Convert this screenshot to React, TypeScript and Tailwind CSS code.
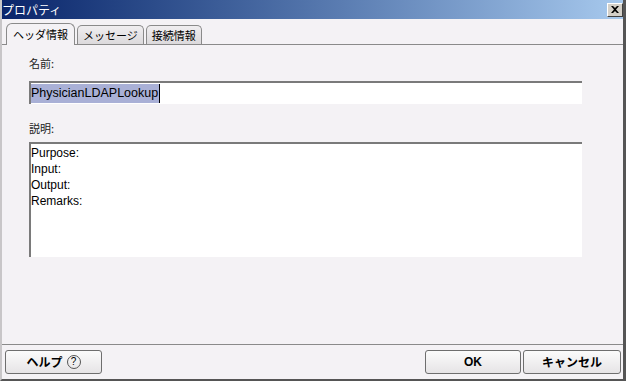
import React from 'react'

const jp = { fontFamily: '"Noto Sans CJK JP", "DejaVu Sans", sans-serif' }
const latin = { fontFamily: '"Liberation Sans", Arial, sans-serif' }

function Tab({ label, active }: { label: string; active?: boolean }) {
  return (
    <div
      className={
        active
          ? 'h-[22px] px-[6px] flex items-center rounded-t-[6px] border border-b-0 border-[#8a8a8a] bg-[#f4f2f5] text-[11px] text-black relative -mb-px z-10'
          : 'h-[19px] px-[5px] flex items-center rounded-t-[5px] border border-b-0 border-[#8a8a8a] bg-gradient-to-b from-[#f0eef0] to-[#dcdadc] text-[11px] text-black'
      }
      style={jp}
    >
      {label}
    </div>
  )
}

function Btn({ children, className }: { children: React.ReactNode; className?: string }) {
  return (
    <button
      className={
        'h-[24px] rounded-[3px] border border-[#6e6e6e] bg-gradient-to-b from-[#fbfbfb] to-[#e6e4e6] text-[12px] font-bold text-black flex items-center justify-center ' +
        (className ?? '')
      }
      style={jp}
    >
      {children}
    </button>
  )
}

export default function App() {
  return (
    <div className="w-[626px] h-[381px] bg-[#f4f2f5] flex flex-col border-l-2 border-l-[#c8c6c8] border-r-[3px] border-r-[#555] border-b-[2px] border-b-[#555] overflow-hidden">
      {/* タイトルバー */}
      <div className="h-[19px] shrink-0 flex items-center justify-between bg-gradient-to-r from-[#0a246a] to-[#a8caee] pl-[2px] pr-[3px] -ml-[2px] -mr-[3px]">
        <span className="text-white text-[12px] leading-none" style={jp}>
          プロパティ
        </span>
        <div className="w-[16px] h-[14px] bg-[#d4d0c8] border border-t-white border-l-white border-r-[#404040] border-b-[#404040] flex items-center justify-center">
          <svg width="8" height="7" viewBox="0 0 8 7">
            <path d="M0 0 L2 0 L4 2 L6 0 L8 0 L5 3.5 L8 7 L6 7 L4 5 L2 7 L0 7 L3 3.5 Z" fill="#000" />
          </svg>
        </div>
      </div>

      {/* タブ */}
      <div className="flex-1 flex flex-col pt-[3px]">
        <div className="h-[22px] flex items-end gap-[2px] pl-[4px]">
          <Tab label="ヘッダ情報" active />
          <Tab label="メッセージ" />
          <Tab label="接続情報" />
        </div>
        <div className="h-[301px] border-t border-b border-[#8a8a8a] pl-[27px] pr-[41px] pt-[9px]">
          <div className="text-[11px] text-[#222] h-[18px] leading-[18px]" style={jp}>
            名前:
          </div>
          <div className="mt-[9px] h-[23px] bg-white border-t-2 border-l-2 border-t-[#7a7a7a] border-l-[#7a7a7a] flex items-center">
            <span className="bg-[#a9b0d6] text-[12.5px] leading-[19px] text-black pr-[1px] border-r border-black" style={latin}>
              PhysicianLDAPLookup
            </span>
          </div>
          <div className="mt-[15px] text-[11px] text-[#222] h-[18px] leading-[18px]" style={jp}>
            説明:
          </div>
          <div
            className="mt-[5px] h-[115px] bg-white border-t-2 border-l-2 border-t-[#7a7a7a] border-l-[#7a7a7a] text-[12px] leading-[16px] text-black pt-[1px]"
            style={latin}
          >
            <div>Purpose:</div>
            <div>Input:</div>
            <div>Output:</div>
            <div>Remarks:</div>
          </div>
        </div>

        {/* ボタン */}
        <div className="flex-1 flex items-center justify-between pl-[3px] pr-[2px]">
          <Btn className="w-[97px] gap-[4px]">
            ヘルプ
            <span className="w-[14px] h-[14px] rounded-full border border-[#555] text-[10px] font-normal leading-none flex items-center justify-center" style={latin}>
              ?
            </span>
          </Btn>
          <div className="flex gap-[2px]">
            <Btn className="w-[96px]">
              <span style={latin} className="font-bold">OK</span>
            </Btn>
            <Btn className="w-[98px]">キャンセル</Btn>
          </div>
        </div>
      </div>
    </div>
  )
}
